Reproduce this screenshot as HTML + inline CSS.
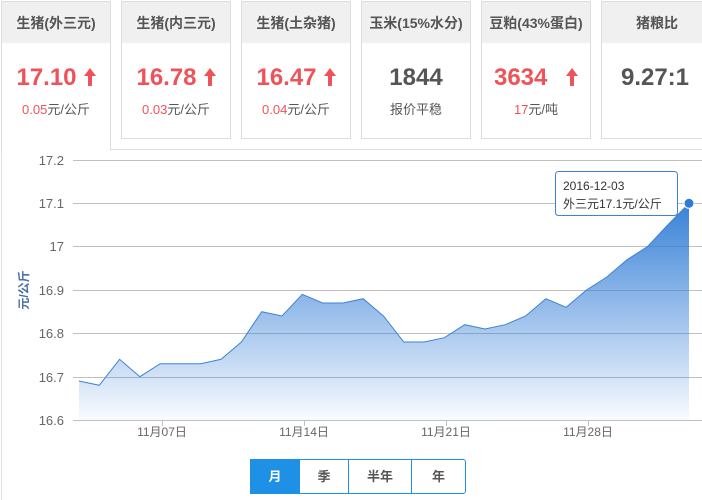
<!DOCTYPE html>
<html><head><meta charset="utf-8"><style>
body{margin:0;width:702px;height:500px;overflow:hidden;background:#fff;font-family:"Liberation Sans","Noto Sans CJK SC",sans-serif;position:relative}
.c{position:absolute;top:1px;width:108px;height:136px;border:1px solid #ddd;background:#fff;text-align:center}
.c .h{height:41px;background:#f0f0f0;line-height:42px;font-size:14px;font-weight:bold;color:#555}
.c .v{margin-top:20px;font-size:24px;font-weight:bold;color:#555;height:30px;line-height:30px}
.c .v.r{color:#f0525a}
.r{color:#f0525a}
.c .s{font-size:13px;color:#555;margin-top:6px}
.ar{display:inline-block;margin-left:7px;vertical-align:top;margin-top:5px}
.btns{position:absolute;top:459px;left:250px;height:33px;border:1px solid #1e90e6;border-radius:0 3px 3px 0;display:flex}
.btns div{text-align:center;line-height:33px;font-size:13px;font-weight:bold;color:#555;border-left:1px solid #1e90e6}
</style></head><body>
<div style="position:absolute;left:110px;top:149px;width:592px;height:1px;background:#ddd"></div>
<div style="position:absolute;left:1px;top:138px;width:1px;height:362px;background:#e2e2e2"></div>
<div class="c" style="left:1px;height:148px;border-bottom:none"><div class="h">生猪(外三元)</div><div class="v r">17.10<svg class="ar" width="12" height="18" viewBox="0 0 12 18"><path d="M6,0 L12,8 L8,8 L8,18 L4,18 L4,8 L0,8Z" fill="#f0525a"/></svg></div><div class="s"><span class="r">0.05</span>元/公斤</div></div>
<div class="c" style="left:121px"><div class="h">生猪(内三元)</div><div class="v r">16.78<svg class="ar" width="12" height="18" viewBox="0 0 12 18"><path d="M6,0 L12,8 L8,8 L8,18 L4,18 L4,8 L0,8Z" fill="#f0525a"/></svg></div><div class="s"><span class="r">0.03</span>元/公斤</div></div>
<div class="c" style="left:241px"><div class="h">生猪(土杂猪)</div><div class="v r">16.47<svg class="ar" width="12" height="18" viewBox="0 0 12 18"><path d="M6,0 L12,8 L8,8 L8,18 L4,18 L4,8 L0,8Z" fill="#f0525a"/></svg></div><div class="s"><span class="r">0.04</span>元/公斤</div></div>
<div class="c" style="left:361px"><div class="h">玉米(15%水分)</div><div class="v">1844</div><div class="s">报价平稳</div></div>
<div class="c" style="left:481px"><div class="h">豆粕(43%蛋白)</div><div class="v r">3634 <svg class="ar" style="margin-left:12px" width="12" height="18" viewBox="0 0 12 18"><path d="M6,0 L12,8 L8,8 L8,18 L4,18 L4,8 L0,8Z" fill="#f0525a"/></svg></div><div class="s"><span class="r">17</span>元/吨</div></div>
<div class="c" style="left:601px;width:110px"><div class="h">猪粮比</div><div class="v" style="text-indent:-4px">9.27:1</div></div>
<svg style="position:absolute;left:0;top:0" width="702" height="500">
<defs><linearGradient id="g" x1="0" y1="0" x2="0" y2="1"><stop offset="0" stop-color="#2e7bd6" stop-opacity="0.95"/><stop offset="1" stop-color="#2e7bd6" stop-opacity="0.03"/></linearGradient></defs>
<g stroke="#c0c0c0" stroke-width="1">
<line x1="73" y1="160.5" x2="702" y2="160.5"/><line x1="73" y1="203.5" x2="702" y2="203.5"/><line x1="73" y1="246.5" x2="702" y2="246.5"/><line x1="73" y1="290.5" x2="702" y2="290.5"/><line x1="73" y1="333.5" x2="702" y2="333.5"/><line x1="73" y1="377.5" x2="702" y2="377.5"/><line x1="73" y1="420.5" x2="702" y2="420.5"/>
<line x1="162.5" y1="420" x2="162.5" y2="426"/><line x1="304.5" y1="420" x2="304.5" y2="426"/><line x1="446.5" y1="420" x2="446.5" y2="426"/><line x1="588.5" y1="420" x2="588.5" y2="426"/>
</g>
<g font-size="13" fill="#666" text-anchor="end">
<text x="64" y="165">17.2</text><text x="64" y="208">17.1</text><text x="64" y="251">17</text><text x="64" y="295">16.9</text><text x="64" y="338">16.8</text><text x="64" y="382">16.7</text><text x="64" y="425">16.6</text></g>
<g font-size="12" fill="#666" text-anchor="middle"><text x="162" y="436">11月07日</text><text x="304" y="436">11月14日</text><text x="446" y="436">11月21日</text><text x="588" y="436">11月28日</text></g>
<text transform="translate(28,290) rotate(-90)" font-size="12" fill="#4a6fa0" font-weight="bold" text-anchor="middle">元/公斤</text>
<path d="M79,381 L99.3,385.3 L119.6,359.3 L139.9,376.7 L160.2,363.7 L180.5,363.7 L200.8,363.7 L221.1,359.3 L241.4,342 L261.7,311.7 L282,316 L302.3,294.3 L322.6,303 L342.9,303 L363.2,298.7 L383.5,316 L403.8,342 L424.1,342 L444.4,337.7 L464.7,324.7 L485,329 L505.3,324.7 L525.6,316 L545.9,298.7 L566.2,307.3 L586.5,290 L606.8,277 L627.1,259.7 L647.4,246.7 L667.7,225 L689,203.3 L689,420 L79,420Z" fill="url(#g)"/>
<path d="M79,381 L99.3,385.3 L119.6,359.3 L139.9,376.7 L160.2,363.7 L180.5,363.7 L200.8,363.7 L221.1,359.3 L241.4,342 L261.7,311.7 L282,316 L302.3,294.3 L322.6,303 L342.9,303 L363.2,298.7 L383.5,316 L403.8,342 L424.1,342 L444.4,337.7 L464.7,324.7 L485,329 L505.3,324.7 L525.6,316 L545.9,298.7 L566.2,307.3 L586.5,290 L606.8,277 L627.1,259.7 L647.4,246.7 L667.7,225 L689,203.3" fill="none" stroke="#3d82d6" stroke-width="1"/>
<circle cx="689" cy="203.3" r="5" fill="#2e7bd6" stroke="#fff" stroke-width="1"/>
<rect x="555.5" y="171.5" width="122" height="44" rx="3" fill="#fff" stroke="#3d82d6"/>
<text x="563" y="190" font-size="12" fill="#333">2016-12-03</text>
<text x="563" y="208" font-size="12" fill="#333">外三元17.1元/公斤</text>
</svg>
<div class="btns"><div style="width:48px;background:#1e90e6;color:#fff;border-left:none">月</div><div style="width:48px">季</div><div style="width:62px">半年</div><div style="width:53px">年</div></div>
</body></html>
